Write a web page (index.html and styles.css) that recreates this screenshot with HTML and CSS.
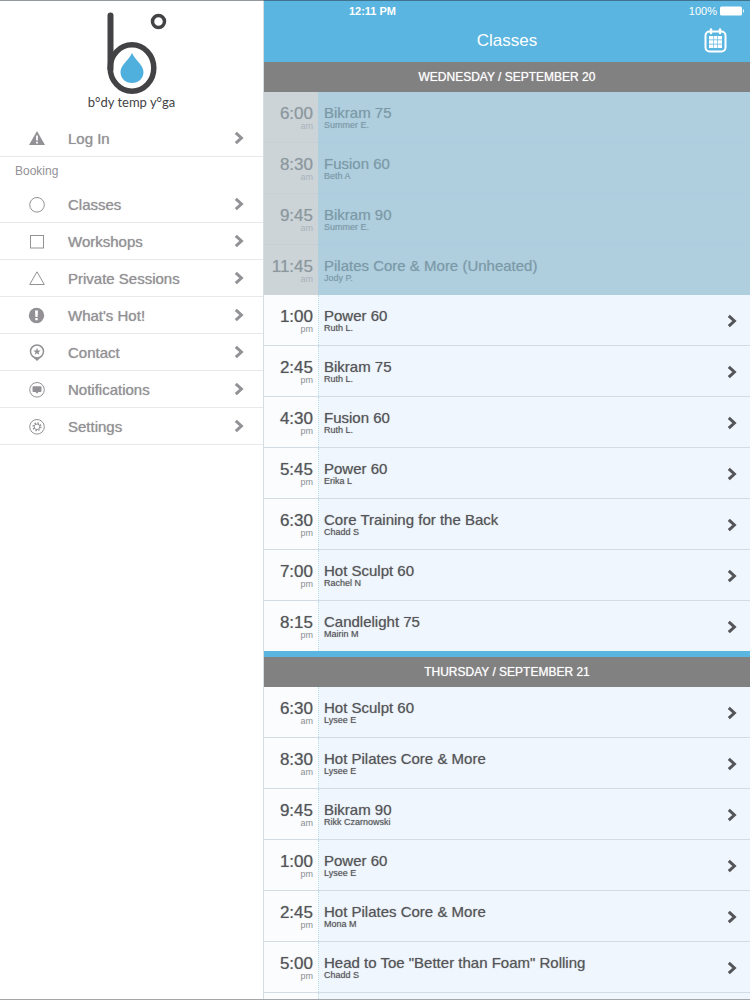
FILE: index.html
```html
<!DOCTYPE html>
<html lang="en">
<head>
    <meta charset="UTF-8">
    <meta name="viewport" content="width=device-width, initial-scale=1.0">
    <title>Body Temp Yoga - Classes</title>
    <link rel="stylesheet" href="styles.css">
</head>
<body>
    <svg class="symbols" aria-hidden="true">
        <symbol id="chevron" viewBox="0 0 10 14"><path d="M1.8 1.8 L7.4 7 L1.8 12.2" fill="none" stroke="currentColor" stroke-width="3"/></symbol>
    </svg>

    <div class="status-bar">
        <span class="clock">12:11 PM</span>
        <span class="battery">100%
            <svg width="25" height="10" viewBox="0 0 25 10"><rect x="0" y="0.5" width="22" height="9" rx="1.5" fill="#fff"/><path d="M23 3 Q25 5 23 7Z" fill="#fff"/></svg>
        </span>
    </div>

    <div class="app">
        <aside class="sidebar">
            <div class="logo">
                <svg width="70" height="84" viewBox="-8 0 70 84" fill="none" stroke="#434345">
                    <path d="M5.500 3.500 V57" stroke-width="6" stroke-linecap="round"/>
                    <ellipse cx="27" cy="56" rx="21.800" ry="23.300" stroke-width="5.500"/>
                    <circle cx="53.500" cy="9.500" r="6" stroke-width="3.500"/>
                    <path d="M27 41 C30 48 38.500 53 38.500 60 C38.500 66.500 33.500 71 27 71 C20.500 71 15.500 66.500 15.500 60 C15.500 53 24 48 27 41Z" fill="#4fb0de" stroke="none"/>
                </svg>
                <p>b°dy temp y°ga</p>
            </div>
            <nav>
                <a class="menu-item" href="#login">
                    <svg class="icon" viewBox="0 0 18 18"><path d="M9 2 L17 16 H1Z" fill="currentColor"/><path d="M9 6.500 V11.500 M9 12.800 V14.600" stroke="#fff" stroke-width="1.800"/></svg>
                    <span>Log In</span>
                    <svg class="chevron"><use href="#chevron"/></svg>
                </a>
                <h2>Booking</h2>
                <a class="menu-item" href="#classes">
                    <svg class="icon" viewBox="0 0 18 18"><circle cx="9" cy="9.800" r="7.300" fill="none" stroke="currentColor"/></svg>
                    <span>Classes</span>
                    <svg class="chevron"><use href="#chevron"/></svg>
                </a>
                <a class="menu-item" href="#workshops">
                    <svg class="icon" viewBox="0 0 18 18"><rect x="2.500" y="3.500" width="13" height="12.500" fill="none" stroke="currentColor"/></svg>
                    <span>Workshops</span>
                    <svg class="chevron"><use href="#chevron"/></svg>
                </a>
                <a class="menu-item" href="#private">
                    <svg class="icon" viewBox="0 0 18 18"><path d="M9 2.800 L16.300 15.500 H1.700Z" fill="none" stroke="currentColor"/></svg>
                    <span>Private Sessions</span>
                    <svg class="chevron"><use href="#chevron"/></svg>
                </a>
                <a class="menu-item" href="#hot">
                    <svg class="icon" viewBox="0 0 18 18"><circle cx="8.500" cy="9.500" r="7.700" fill="currentColor"/><path d="M7 4.500 H10 L9.600 11 H7.400Z M7.300 12 H9.700 V14.200 H7.300Z" fill="#fff"/></svg>
                    <span>What's Hot!</span>
                    <svg class="chevron"><use href="#chevron"/></svg>
                </a>
                <a class="menu-item" href="#contact">
                    <svg class="icon" viewBox="0 0 18 18"><circle cx="9" cy="8.500" r="6.500" fill="none" stroke="currentColor" stroke-width="1.500"/><path d="M4.500 13.500 Q9 16 13.500 13.500 L9 18Z" fill="currentColor"/><path d="M9 4.800 L10 7.400 L12.700 7.500 L10.600 9.200 L11.300 11.800 L9 10.300 L6.700 11.800 L7.400 9.200 L5.300 7.500 L8 7.400Z" fill="currentColor"/></svg>
                    <span>Contact</span>
                    <svg class="chevron"><use href="#chevron"/></svg>
                </a>
                <a class="menu-item" href="#notifications">
                    <svg class="icon" viewBox="0 0 18 18"><circle cx="9" cy="9.800" r="7.300" fill="none" stroke="currentColor"/><path d="M5.500 6.300 H12.500 Q13.500 6.300 13.500 7.300 V11 Q13.500 12 12.500 12 H10.500 L9 13.800 L7.500 12 H5.500 Q4.500 12 4.500 11 V7.300 Q4.500 6.300 5.500 6.300Z" fill="currentColor"/></svg>
                    <span>Notifications</span>
                    <svg class="chevron"><use href="#chevron"/></svg>
                </a>
                <a class="menu-item" href="#settings">
                    <svg class="icon" viewBox="0 0 18 18" fill="none" stroke="currentColor"><circle cx="9" cy="9.800" r="7.300"/><circle cx="9" cy="9.800" r="2.800"/><circle cx="9" cy="9.800" r="3.900" stroke-width="1.300" stroke-dasharray="1.500 1.563"/></svg>
                    <span>Settings</span>
                    <svg class="chevron"><use href="#chevron"/></svg>
                </a>
            </nav>
        </aside>

        <main class="schedule">
            <header class="title-bar">
                <h1>Classes</h1>
                <button class="calendar-btn" aria-label="Calendar">
                    <svg width="24" height="26" viewBox="0 0 24 26">
                        <rect x="1.500" y="3.500" width="20" height="20" rx="4" fill="none" stroke="#fff" stroke-width="2"/>
                        <path d="M7 1.500 V5 M16 1.500 V5" stroke="#fff" stroke-width="2.500" stroke-linecap="round"/>
                        <path d="M5 8h4v3.600h-4z M9.600 8h3.800v3.600h-3.800z M14 8h4v3.600h-4z M5 12.200h4v3.600h-4z M9.600 12.200h3.800v3.600h-3.800z M14 12.200h4v3.600h-4z M5 16.400h4v3.600h-4z M9.600 16.400h3.800v3.600h-3.800z M14 16.400h4v3.600h-4z" fill="#fff"/>
                    </svg>
                </button>
            </header>

            <h2 class="day">WEDNESDAY / SEPTEMBER 20</h2>
            <ul class="class-list past">
                <li><div class="time">6:00<small>am</small></div><div class="info">Bikram 75<small>Summer E.</small></div></li>
                <li><div class="time">8:30<small>am</small></div><div class="info">Fusion 60<small>Beth A</small></div></li>
                <li><div class="time">9:45<small>am</small></div><div class="info">Bikram 90<small>Summer E.</small></div></li>
                <li><div class="time">11:45<small>am</small></div><div class="info">Pilates Core &amp; More (Unheated)<small>Jody P.</small></div></li>
            </ul>
            <ul class="class-list">
                <li><div class="time">1:00<small>pm</small></div><a class="info" href="#c1">Power 60<small>Ruth L.</small><svg class="chevron"><use href="#chevron"/></svg></a></li>
                <li><div class="time">2:45<small>pm</small></div><a class="info" href="#c2">Bikram 75<small>Ruth L.</small><svg class="chevron"><use href="#chevron"/></svg></a></li>
                <li><div class="time">4:30<small>pm</small></div><a class="info" href="#c3">Fusion 60<small>Ruth L.</small><svg class="chevron"><use href="#chevron"/></svg></a></li>
                <li><div class="time">5:45<small>pm</small></div><a class="info" href="#c4">Power 60<small>Erika L</small><svg class="chevron"><use href="#chevron"/></svg></a></li>
                <li><div class="time">6:30<small>pm</small></div><a class="info" href="#c5">Core Training for the Back<small>Chadd S</small><svg class="chevron"><use href="#chevron"/></svg></a></li>
                <li><div class="time">7:00<small>pm</small></div><a class="info" href="#c6">Hot Sculpt 60<small>Rachel N</small><svg class="chevron"><use href="#chevron"/></svg></a></li>
                <li><div class="time">8:15<small>pm</small></div><a class="info" href="#c7">Candlelight 75<small>Mairin M</small><svg class="chevron"><use href="#chevron"/></svg></a></li>
            </ul>

            <h2 class="day next-day">THURSDAY / SEPTEMBER 21</h2>
            <ul class="class-list fill">
                <li><div class="time">6:30<small>am</small></div><a class="info" href="#c8">Hot Sculpt 60<small>Lysee E</small><svg class="chevron"><use href="#chevron"/></svg></a></li>
                <li><div class="time">8:30<small>am</small></div><a class="info" href="#c9">Hot Pilates Core &amp; More<small>Lysee E</small><svg class="chevron"><use href="#chevron"/></svg></a></li>
                <li><div class="time">9:45<small>am</small></div><a class="info" href="#c10">Bikram 90<small>Rikk Czarnowski</small><svg class="chevron"><use href="#chevron"/></svg></a></li>
                <li><div class="time">1:00<small>pm</small></div><a class="info" href="#c11">Power 60<small>Lysee E</small><svg class="chevron"><use href="#chevron"/></svg></a></li>
                <li><div class="time">2:45<small>pm</small></div><a class="info" href="#c12">Hot Pilates Core &amp; More<small>Mona M</small><svg class="chevron"><use href="#chevron"/></svg></a></li>
                <li><div class="time">5:00<small>pm</small></div><a class="info" href="#c13">Head to Toe "Better than Foam" Rolling<small>Chadd S</small><svg class="chevron"><use href="#chevron"/></svg></a></li>
                <li class="rest"><div class="time"></div><div class="info"></div></li>
            </ul>
        </main>
    </div>
</body>
</html>
```
FILE: styles.css
```css
* {
    box-sizing: border-box;
}

body {
    margin: 0;
    font-family: "Liberation Sans", Arial, sans-serif;
    background-color: #fff;
}

h1, h2, p, ul {
    margin: 0;
    padding: 0;
    font-weight: normal;
}

a {
    color: inherit;
    text-decoration: none;
}

.symbols {
    display: none;
}

.app {
    display: flex;
    min-height: 100vh;
    border-bottom: 1px solid #a3a7aa;
}

/* status bar sits over the sidebar and the title bar */
.status-bar {
    position: absolute;
    top: 0;
    left: 0;
    right: 0;
    height: 20px;
    padding-right: 5px;
    display: grid;
    grid-template-columns: 1fr auto 1fr;
    align-items: center;
    color: #fff;
    font-size: 11px;
    border-top: 1px solid rgba(40, 50, 60, 0.5);
}

.clock {
    grid-column: 2;
    font-weight: bold;
}

.battery {
    display: flex;
    justify-content: flex-end;
    align-items: center;
    gap: 3px;
}

.sidebar {
    flex: 0 0 264px;
    border-right: 1px solid #d5dde1;
    color: #939195;
}

.logo {
    height: 120px;
    padding-top: 12px;
    text-align: center;
}

.logo svg {
    display: block;
    margin: 0 auto;
}

.logo p {
    font-family: Lato, sans-serif;
    font-size: 13px;
    line-height: 12px;
    color: #434345;
}

.sidebar h2 {
    height: 29px;
    padding-left: 15px;
    font-size: 12px;
    line-height: 29px;
}

.menu-item {
    display: flex;
    align-items: center;
    height: 37px;
    padding: 0 19px 0 28px;
    border-bottom: 1px solid #e6e8ea;
    font-size: 15px;
    text-shadow: 0 0 1px #aaa8ac;
}

.icon {
    width: 18px;
    height: 18px;
    margin-right: 22px;
}

.menu-item .chevron {
    margin-left: auto;
}

.chevron {
    width: 10px;
    height: 14px;
}

.schedule {
    flex: 1;
    display: flex;
    flex-direction: column;
    background-color: #5ab5e0;
}

.title-bar {
    display: grid;
    grid-template-columns: 1fr auto 1fr;
    align-items: center;
    height: 62px;
    padding: 20px 22px 0;
    color: #fff;
}

.title-bar h1 {
    grid-column: 2;
    font-size: 17px;
}

.calendar-btn {
    justify-self: end;
    padding: 0;
    border: none;
    background: none;
    cursor: pointer;
}

.calendar-btn svg {
    display: block;
}

.day {
    height: 30px;
    background-color: #818181;
    color: #fff;
    font-size: 12px;
    line-height: 30px;
    text-align: center;
    text-shadow: 0 0 1px #ddd;
}

.next-day {
    margin-top: 6px;
}

.class-list {
    list-style: none;
    display: flex;
    flex-direction: column;
    gap: 1px;
    background-color: #d3dce5;
}

.class-list li {
    display: flex;
    height: 50px;
}

.time {
    flex: 0 0 54px;
    padding: 13px 5px 0 0;
    background-color: #fafcfe;
    color: #545559;
    font-size: 17px;
    line-height: 18px;
    text-align: right;
    text-shadow: 0 0 1px #999;
}

.time small {
    display: block;
    font-size: 9px;
    line-height: 6px;
    color: #8b8e92;
    text-shadow: none;
}

.info {
    flex: 1;
    display: grid;
    grid-template-columns: 1fr auto;
    grid-template-rows: 16px 10px;
    align-content: start;
    padding: 13px 13px 0 5px;
    background-color: #f0f6fe;
    border-left: 1px dotted #b9dfe0;
    color: #545559;
    font-size: 15px;
    line-height: 16px;
    text-shadow: 0 0 1px #999;
}

.info small {
    grid-row: 2;
    font-size: 9px;
    line-height: 8px;
}

.info .chevron {
    grid-column: 2;
    grid-row: 1 / 3;
    align-self: center;
}

.past {
    background: linear-gradient(to right, #c7d0d4 54px, #accddd 54px);
}

.past .time {
    background-color: #ccd4d8;
    color: #8c979e;
    text-shadow: 0 0 1px #a9b3b9;
}

.past .time small {
    color: #a9b3b9;
}

.past .info {
    background-color: #afcfdf;
    border-left-color: #afcfdf;
    color: #7c99a7;
    text-shadow: 0 0 1px #95b2c0;
}

.fill {
    flex: 1;
}

.class-list .rest {
    flex: 1;
    height: auto;
}

.rest .time,
.rest .info {
    padding-top: 0;
    padding-bottom: 0;
    grid-template-rows: none;
}
```
